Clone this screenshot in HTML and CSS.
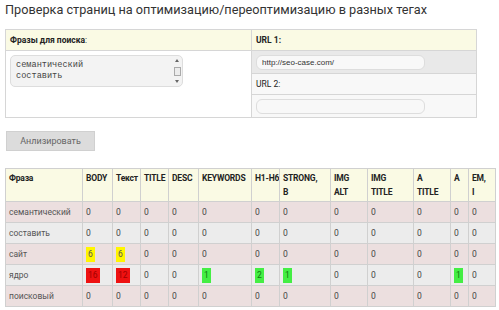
FILE: index.html
```html
<!DOCTYPE html>
<html lang="ru">
<head>
  <meta charset="UTF-8" />
  <title>Проверка страниц</title>
  <link rel="stylesheet" href="styles.css">
</head>
<body>
  <h1 class="title">Проверка страниц на оптимизацию/переоптимизацию в разных тегах</h1>

  <table class="form">
    <tr class="head">
      <td class="phrases-col"><b>Фразы для поиска</b>:</td>
      <td><b>URL 1:</b></td>
    </tr>
    <tr class="grey">
      <td rowspan="3" class="phrases-cell">
        <div class="phrases-box">
          <textarea class="phrases">семантический
составить
сайт
ядро
поисковый</textarea>
          <div class="scroll">
            <span class="arrow up"></span>
            <span class="thumb"></span>
            <span class="arrow down"></span>
          </div>
        </div>
      </td>
      <td><input class="url" type="text" value="http://seo-case.com/"></td>
    </tr>
    <tr class="light">
      <td>URL 2:</td>
    </tr>
    <tr class="light">
      <td><input class="url" type="text" value=""></td>
    </tr>
  </table>

  <button class="run">Анлизировать</button>

  <table class="results">
    <colgroup>
      <col style="width:77px"><col style="width:30px"><col style="width:28px"><col style="width:28px">
      <col style="width:30px"><col style="width:53px"><col style="width:28px"><col style="width:51px">
      <col style="width:37px"><col style="width:46px"><col style="width:37px"><col style="width:18px">
      <col style="width:27px">
    </colgroup>
    <tr class="head">
      <th>Фраза</th><th>BODY</th><th>Текст</th><th>TITLE</th><th>DESC</th><th>KEYWORDS</th>
      <th class="nowrap">H1-H6</th><th>STRONG,<br>B</th><th>IMG<br>ALT</th><th>IMG<br>TITLE</th><th>A<br>TITLE</th><th>A</th><th>EM,<br>I</th>
    </tr>
    <tr class="pink">
      <td class="word">семантический</td><td>0</td><td>0</td><td>0</td><td>0</td><td>0</td>
      <td>0</td><td>0</td><td>0</td><td>0</td><td>0</td><td>0</td><td>0</td>
    </tr>
    <tr class="grey">
      <td class="word">составить</td><td>0</td><td>0</td><td>0</td><td>0</td><td>0</td>
      <td>0</td><td>0</td><td>0</td><td>0</td><td>0</td><td>0</td><td>0</td>
    </tr>
    <tr class="pink">
      <td class="word">сайт</td><td><span class="mark yellow">6</span></td><td><span class="mark yellow">6</span></td><td>0</td><td>0</td><td>0</td>
      <td>0</td><td>0</td><td>0</td><td>0</td><td>0</td><td>0</td><td>0</td>
    </tr>
    <tr class="grey">
      <td class="word">ядро</td><td><span class="mark red">16</span></td><td><span class="mark red">12</span></td><td>0</td><td>0</td><td><span class="mark green">1</span></td>
      <td><span class="mark green">2</span></td><td><span class="mark green">1</span></td><td>0</td><td>0</td><td>0</td><td><span class="mark green">1</span></td><td>0</td>
    </tr>
    <tr class="pink">
      <td class="word">поисковый</td><td>0</td><td>0</td><td>0</td><td>0</td><td>0</td>
      <td>0</td><td>0</td><td>0</td><td>0</td><td>0</td><td>0</td><td>0</td>
    </tr>
  </table>
</body>
</html>
```

FILE: styles.css
```css
* { box-sizing: border-box; }

body {
  margin: 0;
  padding: 0 5px;
  background: #fff;
  color: #333;
  font-family: 'Roboto', sans-serif;
  font-size: 8.5px;
}

.title {
  font-family: 'Roboto', sans-serif;
  font-weight: normal;
  font-size: 12.7px;
  line-height: 20px;
  color: #333;
  margin: 0 0 9px;
}

table {
  border-collapse: collapse;
}

/* form block */
.form {
  width: 472px;
  border: 1px solid #ccc;
}

.form td {
  border: 1px solid #d6d6d6;
  padding: 0 4px;
  height: 21px;
  vertical-align: middle;
  color: #222;
}

.form .phrases-col { width: 246px; }

.form .head td {
  background: #fafae4;
  height: 21px;
}

.form .grey td { background: #e9e9e9; height: 23px; }
.form .light td { background: #f8f8f8; }
.form .light + .light td { height: 23px; }

.form .phrases-cell {
  background: #fff !important;
  vertical-align: top;
  padding: 4px 4px;
}

.phrases-box {
  display: flex;
  width: 173px;
  height: 32px;
  padding: 4px 1px 4px 5px;
  border: 1px solid #ddd;
  border-radius: 5px;
  background: #f3f3f3;
}

.phrases {
  flex: 1;
  height: 22px;
  margin: 0;
  padding: 0;
  border: none;
  background: transparent;
  font-family: 'Liberation Mono', monospace;
  font-size: 8.6px;
  line-height: 11px;
  color: #444;
  resize: none;
  overflow: hidden;
  outline: none;
}

.scroll {
  display: flex;
  flex-direction: column;
  align-items: center;
  justify-content: space-between;
  width: 8px;
  margin-top: -1px;
  height: 24px;
}

.arrow {
  width: 0;
  height: 0;
  border-left: 2px solid transparent;
  border-right: 2px solid transparent;
}

.arrow.up { border-bottom: 3px solid #666; }
.arrow.down { border-top: 3px solid #666; }

.thumb {
  width: 7px;
  height: 9px;
  background: #ececec;
  border: 1px solid #aaa;
}

.url {
  display: block;
  width: 169px;
  height: 15px;
  margin: 0;
  padding: 0 5px;
  border: 1px solid #ddd;
  border-radius: 6px;
  background: #f8f8f8;
  font-family: 'Liberation Sans', sans-serif;
  font-size: 8px;
  color: #333;
}

.run {
  display: block;
  margin: 13px 0 17px 1px;
  width: 89px;
  height: 20px;
  padding: 0;
  border: 1px solid #d0d0d0;
  background: #dcdcdc;
  color: #666;
  font-family: 'Roboto', sans-serif;
  font-size: 9px;
}

/* results */
.results {
  table-layout: fixed;
  width: 490px;
  border: 1px solid #ccc;
}

.results th,
.results td {
  border: 1px solid #d0d0d0;
  padding: 0 2px 0 3px;
  text-align: left;
  color: #444;
  overflow: hidden;
}

.results th {
  background: #fafae4;
  height: 33px;
  vertical-align: top;
  padding-top: 2px;
  line-height: 14px;
  font-weight: bold;
  color: #222;
  letter-spacing: -0.2px;
}

.results th.nowrap { white-space: nowrap; }

.results td {
  height: 21px;
  vertical-align: middle;
}

.results .word { color: #555; }

.results .pink td { background: #ecdfdf; }
.results .grey td { background: #ececec; }

.mark {
  display: inline-block;
  height: 15px;
  line-height: 15px;
  padding: 0 2px;
}

.yellow { background: #fff600; color: #555; }
.red { background: #ee1111; color: #a00000; }
.green { background: #44ee44; color: #117711; }
```
